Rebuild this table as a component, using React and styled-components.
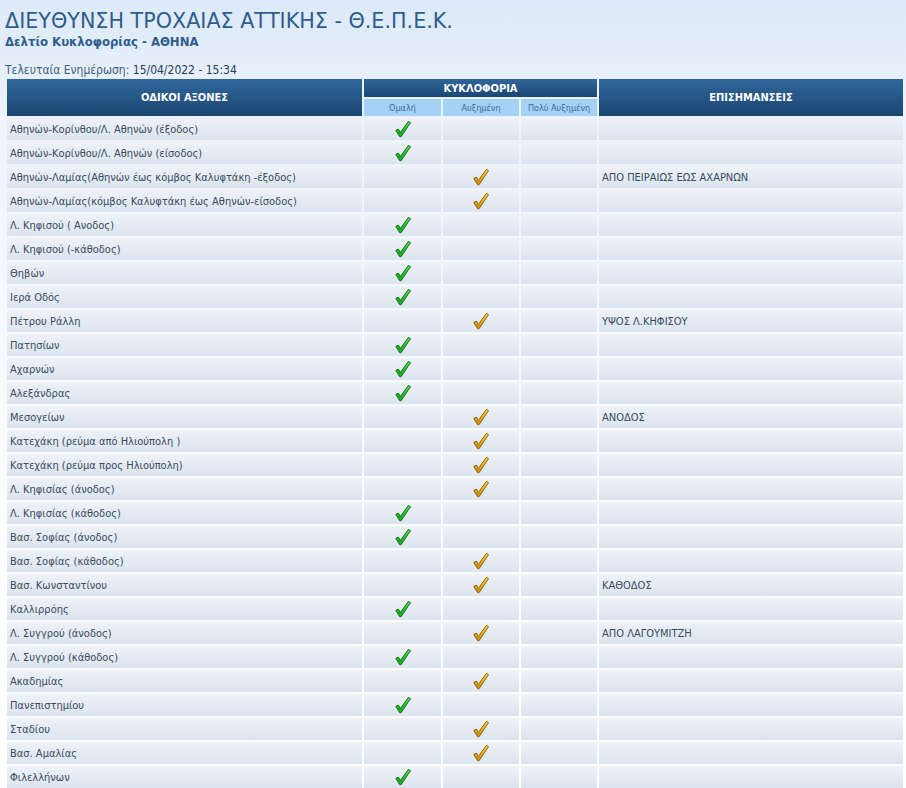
import styled, { createGlobalStyle } from "styled-components";

const GlobalStyle = createGlobalStyle`
  html, body {
    margin: 0;
    padding: 0;
  }
  body {
    background: linear-gradient(to bottom, #dce9f8 0px, #eef4fc 120px, #fafcff 420px, #ffffff 788px) no-repeat;
    min-height: 788px;
    font-family: "DejaVu Sans Condensed", "DejaVu Sans", sans-serif;
  }
`;

const roads = [
  ["Αθηνών-Κορίνθου/Λ. Αθηνών (έξοδος)", 1, ""],
  ["Αθηνών-Κορίνθου/Λ. Αθηνών (είσοδος)", 1, ""],
  ["Αθηνών-Λαμίας(Αθηνών έως κόμβος Καλυφτάκη -έξοδος)", 2, "ΑΠΟ ΠΕΙΡΑΙΩΣ ΕΩΣ ΑΧΑΡΝΩΝ"],
  ["Αθηνών-Λαμίας(κόμβος Καλυφτάκη έως Αθηνών-είσοδος)", 2, ""],
  ["Λ. Κηφισού ( Ανοδος)", 1, ""],
  ["Λ. Κηφισού (-κάθοδος)", 1, ""],
  ["Θηβών", 1, ""],
  ["Ιερά Οδός", 1, ""],
  ["Πέτρου Ράλλη", 2, "ΥΨΟΣ Λ.ΚΗΦΙΣΟΥ"],
  ["Πατησίων", 1, ""],
  ["Αχαρνών", 1, ""],
  ["Αλεξάνδρας", 1, ""],
  ["Μεσογείων", 2, "ΑΝΟΔΟΣ"],
  ["Κατεχάκη (ρεύμα από Ηλιούπολη )", 2, ""],
  ["Κατεχάκη (ρεύμα προς Ηλιούπολη)", 2, ""],
  ["Λ. Κηφισίας (άνοδος)", 2, ""],
  ["Λ. Κηφισίας (κάθοδος)", 1, ""],
  ["Βασ. Σοφίας (άνοδος)", 1, ""],
  ["Βασ. Σοφίας (κάθοδος)", 2, ""],
  ["Βασ. Κωνσταντίνου", 2, "ΚΑΘΟΔΟΣ"],
  ["Καλλιρρόης", 1, ""],
  ["Λ. Συγγρού (άνοδος)", 2, "ΑΠΟ ΛΑΓΟΥΜΙΤΖΗ"],
  ["Λ. Συγγρού (κάθοδος)", 1, ""],
  ["Ακαδημίας", 2, ""],
  ["Πανεπιστημίου", 1, ""],
  ["Σταδίου", 2, ""],
  ["Βασ. Αμαλίας", 2, ""],
  ["Φιλελλήνων", 1, ""],
];

const Check = ({ level }) => {
  const light = level === 1 ? "#4fe04a" : "#ffd23a";
  const dark = level === 1 ? "#12a018" : "#c98a00";
  const edge = level === 1 ? "#0b6b10" : "#8a5a00";
  const id = `chk${level}`;
  return (
    <svg width="18" height="18" viewBox="0 0 18 18">
      <defs>
        <linearGradient id={id} x1="0" y1="0" x2="0" y2="1">
          <stop offset="0" stopColor={light} />
          <stop offset="1" stopColor={dark} />
        </linearGradient>
      </defs>
      <path
        d="M1.8 10.4 L4.4 9 L6.4 12.4 L14.4 1.4 L16.6 2.6 L7.2 16.6 L5.6 16.6 Z"
        fill={`url(#${id})`}
        stroke={edge}
        strokeWidth="0.9"
        strokeLinejoin="round"
      />
    </svg>
  );
};

const Page = styled.div`
  padding: 8px 3px 0 5px;
`;

const Title = styled.h1`
  margin: 0;
  font-family: "DejaVu Sans", sans-serif;
  font-weight: normal;
  font-size: 20.7px;
  line-height: 26px;
  color: #2e5d8c;
`;

const Subtitle = styled.h2`
  margin: 0;
  font-size: 13px;
  line-height: 16px;
  font-weight: bold;
  color: #2e5d8c;
`;

const Updated = styled.div`
  margin-top: 13px;
  font-size: 12px;
  line-height: 14px;
  color: #3b5f82;

  b {
    font-weight: normal;
    color: #223d5a;
  }
`;

const Table = styled.table`
  width: 900px;
  margin-left: 5px;
  border-collapse: separate;
  border-spacing: 2px;
  table-layout: fixed;
  font-size: 11px;
`;

const Head = styled.th`
  background: linear-gradient(to bottom, #31679b, #1a4671);
  color: #ffffff;
  font-weight: bold;
  font-size: 11px;
  padding: 0;
  height: ${(p) => p.$h}px;
  text-align: center;
  vertical-align: middle;
`;

const SubHead = styled.th`
  background: #a4d1f6;
  color: #3e6b93;
  font-weight: normal;
  font-size: 9px;
  height: 17px;
  padding: 0;
  text-align: center;
`;

const Cell = styled.td`
  background: linear-gradient(to bottom, #eef2f8, #dbe4ef);
  height: 22px;
  padding: 0 ${(p) => (p.$text ? "3px" : "0")};
  color: #3a4a5c;
  font-size: 11px;
  text-align: ${(p) => (p.$center ? "center" : "left")};
  vertical-align: middle;
  white-space: nowrap;
  overflow: hidden;

  svg {
    display: block;
    margin: 0 auto;
  }
`;

export default function App() {
  return (
    <>
      <GlobalStyle />
      <Page>
        <Title>ΔΙΕΥΘΥΝΣΗ ΤΡΟΧΑΙΑΣ ΑΤΤΙΚΗΣ - Θ.Ε.Π.Ε.Κ.</Title>
        <Subtitle>Δελτίο Κυκλοφορίας - ΑΘΗΝΑ</Subtitle>
        <Updated>
          Τελευταία Ενημέρωση: <b>15/04/2022 - 15:34</b>
        </Updated>
      </Page>
      <Table>
        <colgroup>
          <col style={{ width: 355 }} />
          <col style={{ width: 77 }} />
          <col style={{ width: 76 }} />
          <col style={{ width: 76 }} />
          <col style={{ width: 304 }} />
        </colgroup>
        <thead>
          <tr>
            <Head rowSpan={2}>ΟΔΙΚΟΙ ΑΞΟΝΕΣ</Head>
            <Head colSpan={3} $h={18}>ΚΥΚΛΟΦΟΡΙΑ</Head>
            <Head rowSpan={2}>ΕΠΙΣΗΜΑΝΣΕΙΣ</Head>
          </tr>
          <tr>
            <SubHead>Ομαλή</SubHead>
            <SubHead>Αυξημένη</SubHead>
            <SubHead>Πολύ Αυξημένη</SubHead>
          </tr>
        </thead>
        <tbody>
          {roads.map(([name, level, note]) => (
            <tr key={name}>
              <Cell $text>{name}</Cell>
              <Cell $center>{level === 1 && <Check level={1} />}</Cell>
              <Cell $center>{level === 2 && <Check level={2} />}</Cell>
              <Cell $center>{level === 3 && <Check level={3} />}</Cell>
              <Cell $text>{note}</Cell>
            </tr>
          ))}
        </tbody>
      </Table>
    </>
  );
}
